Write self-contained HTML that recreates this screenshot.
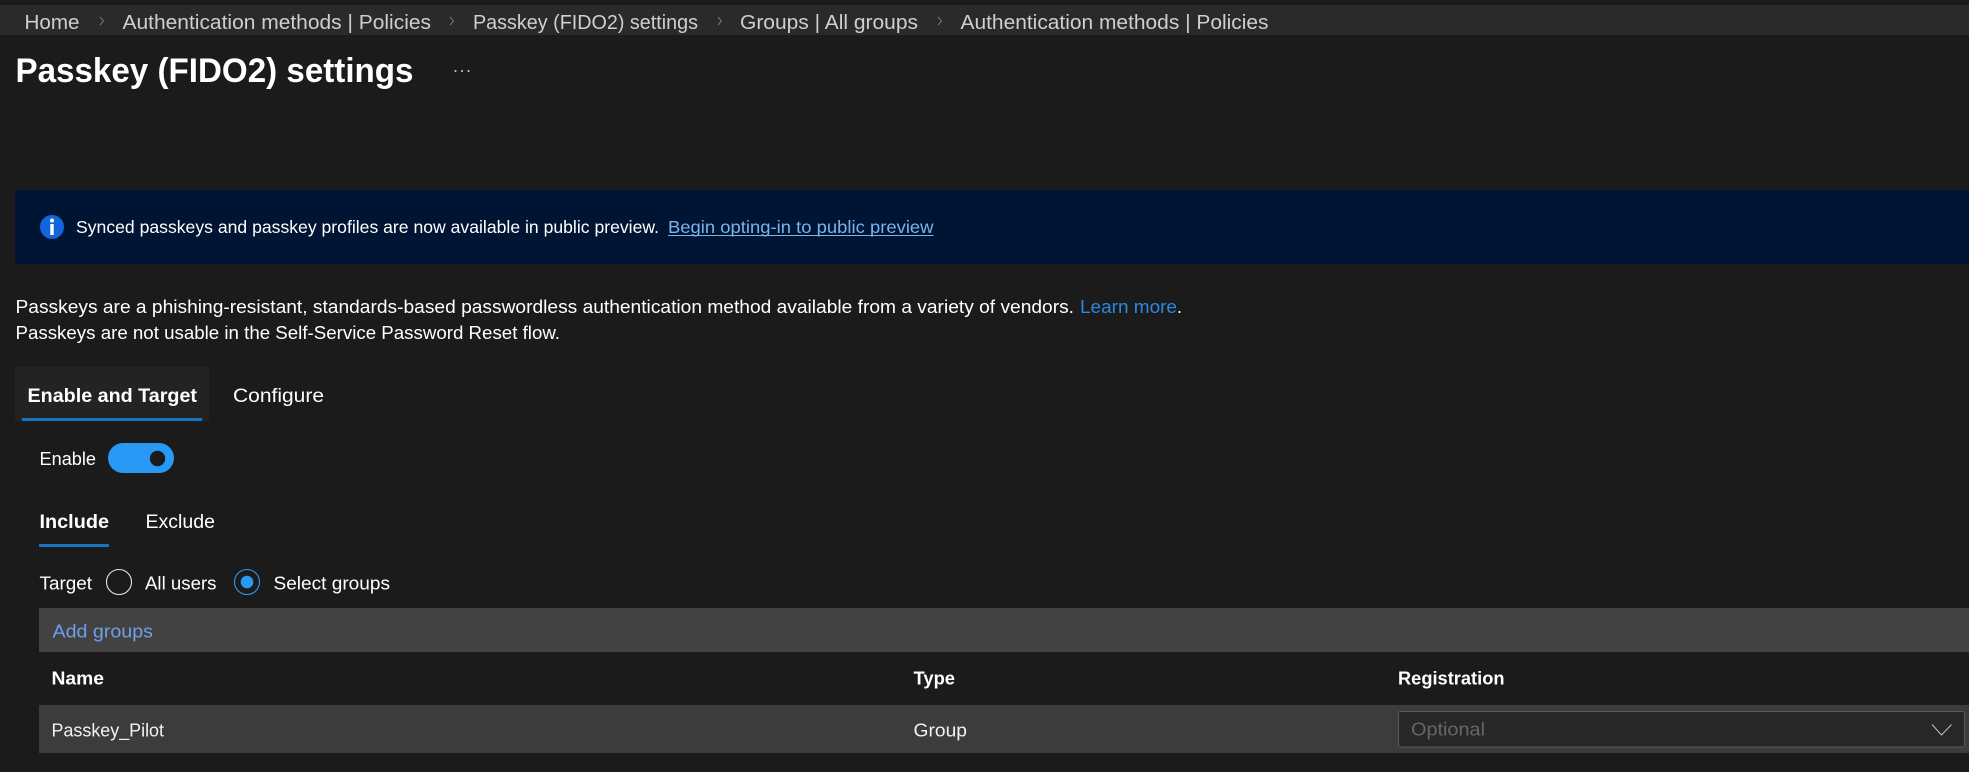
<!DOCTYPE html>
<html lang="en">
<head>
<meta charset="utf-8">
<title>Passkey (FIDO2) settings</title>
<style>
html,body{margin:0;padding:0;background:#1b1b1b;width:1969px;height:772px;overflow:hidden}
svg{display:block;position:absolute;left:0;top:0}
text{font-family:"Liberation Sans",sans-serif;font-size:18px;fill:#fff}
.bc{font-size:20px;fill:#cfcfcf}
.b{font-weight:700}
</style>
</head>
<body>
<svg width="1969" height="772" viewBox="0 0 1969 772" xmlns="http://www.w3.org/2000/svg">
<rect width="1969" height="772" fill="#1b1b1b"/>

<!-- Breadcrumb -->
<rect x="0" y="5" width="1969" height="30" fill="#2a2a2a"/>
<text class="bc" x="24.500" y="29" textLength="55" lengthAdjust="spacingAndGlyphs">Home</text>
<polyline points="100,17 103.500,21 100,25" fill="none" stroke="#777" stroke-width="1"/>
<text class="bc" x="122.500" y="29" textLength="308.500" lengthAdjust="spacingAndGlyphs">Authentication methods | Policies</text>
<polyline points="450,17 453.500,21 450,25" fill="none" stroke="#777" stroke-width="1"/>
<text class="bc" x="473" y="29" textLength="225" lengthAdjust="spacingAndGlyphs">Passkey (FIDO2) settings</text>
<polyline points="718,17 721.500,21 718,25" fill="none" stroke="#777" stroke-width="1"/>
<text class="bc" x="740" y="29" textLength="178" lengthAdjust="spacingAndGlyphs">Groups | All groups</text>
<polyline points="938,17 941.500,21 938,25" fill="none" stroke="#777" stroke-width="1"/>
<text class="bc" x="960.500" y="29" textLength="308" lengthAdjust="spacingAndGlyphs">Authentication methods | Policies</text>

<!-- Title -->
<text class="b" x="15.500" y="82" style="font-size:34px" textLength="398" lengthAdjust="spacingAndGlyphs">Passkey (FIDO2) settings</text>
<circle cx="455.500" cy="71" r="1" fill="#d8d8d8"/>
<circle cx="462" cy="71" r="1" fill="#d8d8d8"/>
<circle cx="468.500" cy="71" r="1" fill="#d8d8d8"/>

<!-- Banner -->
<rect x="15" y="190" width="1954" height="74" fill="#001433"/>
<circle cx="52" cy="227" r="12" fill="#1266dc"/>
<circle cx="52" cy="220.500" r="2" fill="#fff"/>
<rect x="50.300" y="224" width="3.400" height="11" fill="#fff"/>
<text x="76" y="233" style="font-size:17.500px" textLength="583" lengthAdjust="spacingAndGlyphs">Synced passkeys and passkey profiles are now available in public preview.</text>
<text x="668" y="233" style="font-size:17.500px;fill:#79b4ee" textLength="265.500" lengthAdjust="spacingAndGlyphs">Begin opting-in to public preview</text>
<line x1="668" y1="235.500" x2="933.500" y2="235.500" stroke="#79b4ee" stroke-width="1"/>

<!-- Description -->
<text x="15.500" y="313" textLength="1058.500" lengthAdjust="spacingAndGlyphs">Passkeys are a phishing-resistant, standards-based passwordless authentication method available from a variety of vendors.</text>
<text x="1080" y="313" style="fill:#2b88e0" textLength="97" lengthAdjust="spacingAndGlyphs">Learn more</text>
<text x="1177" y="313">.</text>
<text x="15.500" y="339" textLength="544.500" lengthAdjust="spacingAndGlyphs">Passkeys are not usable in the Self-Service Password Reset flow.</text>

<!-- Tabs -->
<rect x="15" y="367" width="194" height="54" rx="2" fill="#232323"/>
<rect x="22" y="418" width="180" height="3" fill="#1a74c4"/>
<text class="b" x="27.500" y="402" style="font-size:19px" textLength="169.500" lengthAdjust="spacingAndGlyphs">Enable and Target</text>
<text x="233" y="402" style="font-size:19px" textLength="91" lengthAdjust="spacingAndGlyphs">Configure</text>

<!-- Enable toggle -->
<text x="39.500" y="465" textLength="56.500" lengthAdjust="spacingAndGlyphs">Enable</text>
<rect x="108" y="443" width="66" height="30" rx="15" fill="#2899f5"/>
<circle cx="157.500" cy="458.500" r="7.700" fill="#1b1b1b"/>

<!-- Include / Exclude -->
<text class="b" x="39.500" y="528" style="font-size:19px" textLength="69.500" lengthAdjust="spacingAndGlyphs">Include</text>
<text x="145.500" y="528" style="font-size:19px" textLength="69.500" lengthAdjust="spacingAndGlyphs">Exclude</text>
<rect x="39" y="544" width="70" height="3" fill="#1a74c4"/>

<!-- Target radios -->
<text x="39.500" y="589.500" textLength="52.500" lengthAdjust="spacingAndGlyphs">Target</text>
<circle cx="119" cy="582" r="12.500" fill="none" stroke="#e6e6e6" stroke-width="1.100"/>
<text x="145" y="589.500" textLength="71.500" lengthAdjust="spacingAndGlyphs">All users</text>
<circle cx="247" cy="582" r="12.500" fill="none" stroke="#2899f5" stroke-width="1.100"/>
<circle cx="247" cy="582" r="6.300" fill="#2899f5"/>
<text x="273.500" y="589.500" textLength="116.500" lengthAdjust="spacingAndGlyphs">Select groups</text>

<!-- Add groups bar -->
<rect x="39" y="608" width="1930" height="44" fill="#424242"/>
<text x="52.500" y="637.500" style="fill:#6f9fea" textLength="100.500" lengthAdjust="spacingAndGlyphs">Add groups</text>

<!-- Table header -->
<text class="b" x="51.500" y="684.500" textLength="52.500" lengthAdjust="spacingAndGlyphs">Name</text>
<text class="b" x="913.500" y="684.500" textLength="41.500" lengthAdjust="spacingAndGlyphs">Type</text>
<text class="b" x="1398" y="684.500" textLength="106.500" lengthAdjust="spacingAndGlyphs">Registration</text>

<!-- Table row -->
<rect x="39" y="705" width="1930" height="48" fill="#3c3c3c"/>
<text x="51.500" y="736.500" style="fill:#f2f2f2" textLength="112.500" lengthAdjust="spacingAndGlyphs">Passkey_Pilot</text>
<text x="913.500" y="736.500" style="fill:#f2f2f2" textLength="53.500" lengthAdjust="spacingAndGlyphs">Group</text>
<rect x="1398.500" y="711.500" width="566" height="35.500" rx="2" fill="#272727" stroke="#5a5a5a" stroke-width="1"/>
<text x="1411" y="735.500" style="fill:#666;font-size:18.500px" textLength="74" lengthAdjust="spacingAndGlyphs">Optional</text>
<polyline points="1932,724.500 1941.500,735 1951.500,724.500" fill="none" stroke="#c0c0c0" stroke-width="1"/>
</svg>
</body>
</html>
